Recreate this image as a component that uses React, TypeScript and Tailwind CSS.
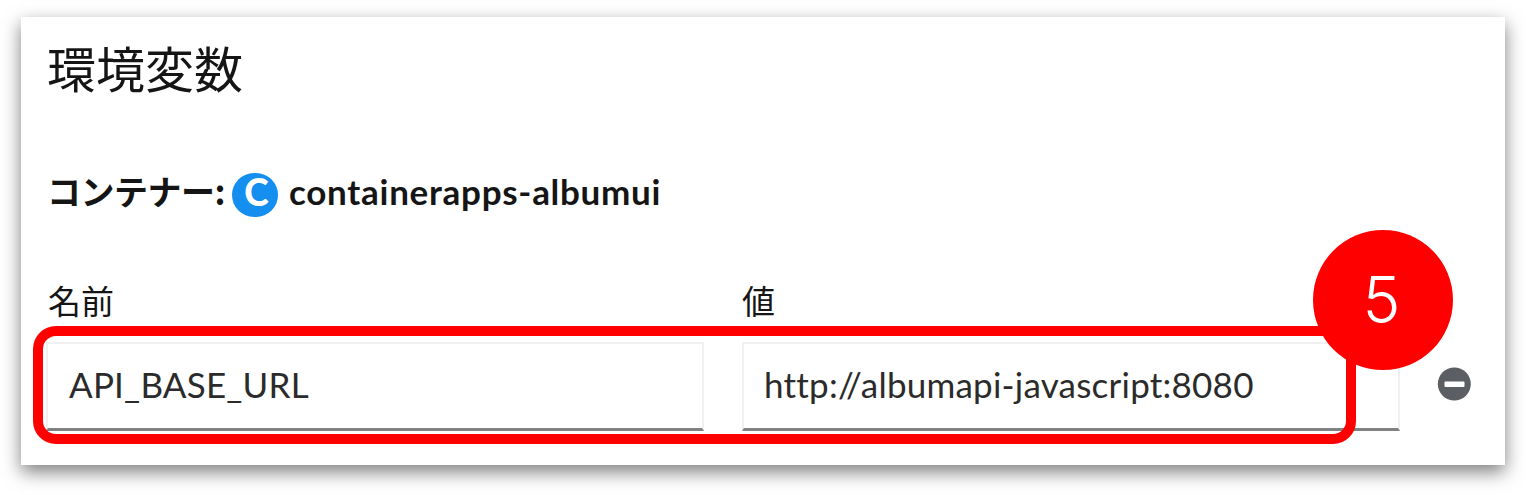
import React from "react";

function Field({ label, value, labelClass, valueClass }: { label: string; value: string; labelClass: string; valueClass: string }) {
  return (
    <label className="flex w-[658px] flex-col">
      <span className={labelClass}>{label}</span>
      <span className="flex h-[89px] items-center border-2 border-b-[3px] border-[#f0f0f0] border-b-[#7f8183] bg-white pb-[3px]">
        <span className={valueClass}>{value}</span>
      </span>
    </label>
  );
}

export default function App() {
  return (
    <div className="h-[495px] w-[1526px] overflow-hidden bg-white pl-[21px] pt-[17px] font-['Lato','Noto_Sans_CJK_JP',sans-serif] text-[#151515]">
      <main className="relative flex h-[448px] w-[1484px] flex-col bg-white pl-[25px] shadow-[0_7px_17px_rgba(0,0,0,0.5)]">
        <h1 className="mt-[14px] h-[72px] pl-px font-['Noto_Sans_CJK_JP',sans-serif] text-[49px] leading-[72px]">環境変数</h1>
        <div className="mt-[66px] flex h-[50px] items-center pl-px font-bold">
          <span className="w-[185px] whitespace-nowrap pb-[7px] font-['Noto_Sans_CJK_JP',sans-serif] text-[34px] leading-[48px] tracking-[-0.5px]">コンテナー:</span>
          <span className="mt-px flex h-11 w-[46px] items-center justify-center rounded-full bg-[#148ff0] pb-[6px] pl-[3px] font-['Lato',sans-serif] text-[37px] font-black leading-none text-white">C</span>
          <span className="ml-[11px] whitespace-nowrap pb-[6px] font-['Lato',sans-serif] text-[35px] leading-[48px] tracking-[0.72px]">containerapps-albumui</span>
        </div>
        <div className="mt-[64px] flex gap-[38px]">
          <Field
            label="名前"
            value="API_BASE_URL"
            labelClass="h-[59px] pl-[2px] font-['Noto_Sans_CJK_JP',sans-serif] text-[33px] leading-[34px]"
            valueClass="pl-[21px] font-['Lato',sans-serif] text-[35px] tracking-[0.2px] text-[#2b2b2b] whitespace-nowrap"
          />
          <Field
            label="値"
            value="http://albumapi-javascript:8080"
            labelClass="h-[59px] font-['Noto_Sans_CJK_JP',sans-serif] text-[33px] leading-[34px]"
            valueClass="pl-[20px] font-['Lato',sans-serif] text-[35px] tracking-[0.23px] text-[#2b2b2b] whitespace-nowrap"
          />
          <button aria-label="Remove" className="ml-[-1px] mt-[84px] h-[34px] w-[34px]">
            <svg viewBox="0 0 34 34" className="h-[34px] w-[34px]">
              <circle cx="17.3" cy="17" r="16.5" fill="#5b5e63" />
              <rect x="7.5" y="14.5" width="20" height="5.5" rx="1" fill="#fff" />
            </svg>
          </button>
        </div>
        <div className="absolute left-[12px] top-[309px] h-[118px] w-[1323px] rounded-[23px] border-[10px] border-[#ff0000]" />
        <div className="absolute left-[1292px] top-[213px] flex h-[140px] w-[140px] items-center justify-center rounded-full bg-[#ff0000] pb-px pr-[3px] font-['Inter',sans-serif] text-[64px] font-[350] leading-none text-white">5</div>
      </main>
    </div>
  );
}
